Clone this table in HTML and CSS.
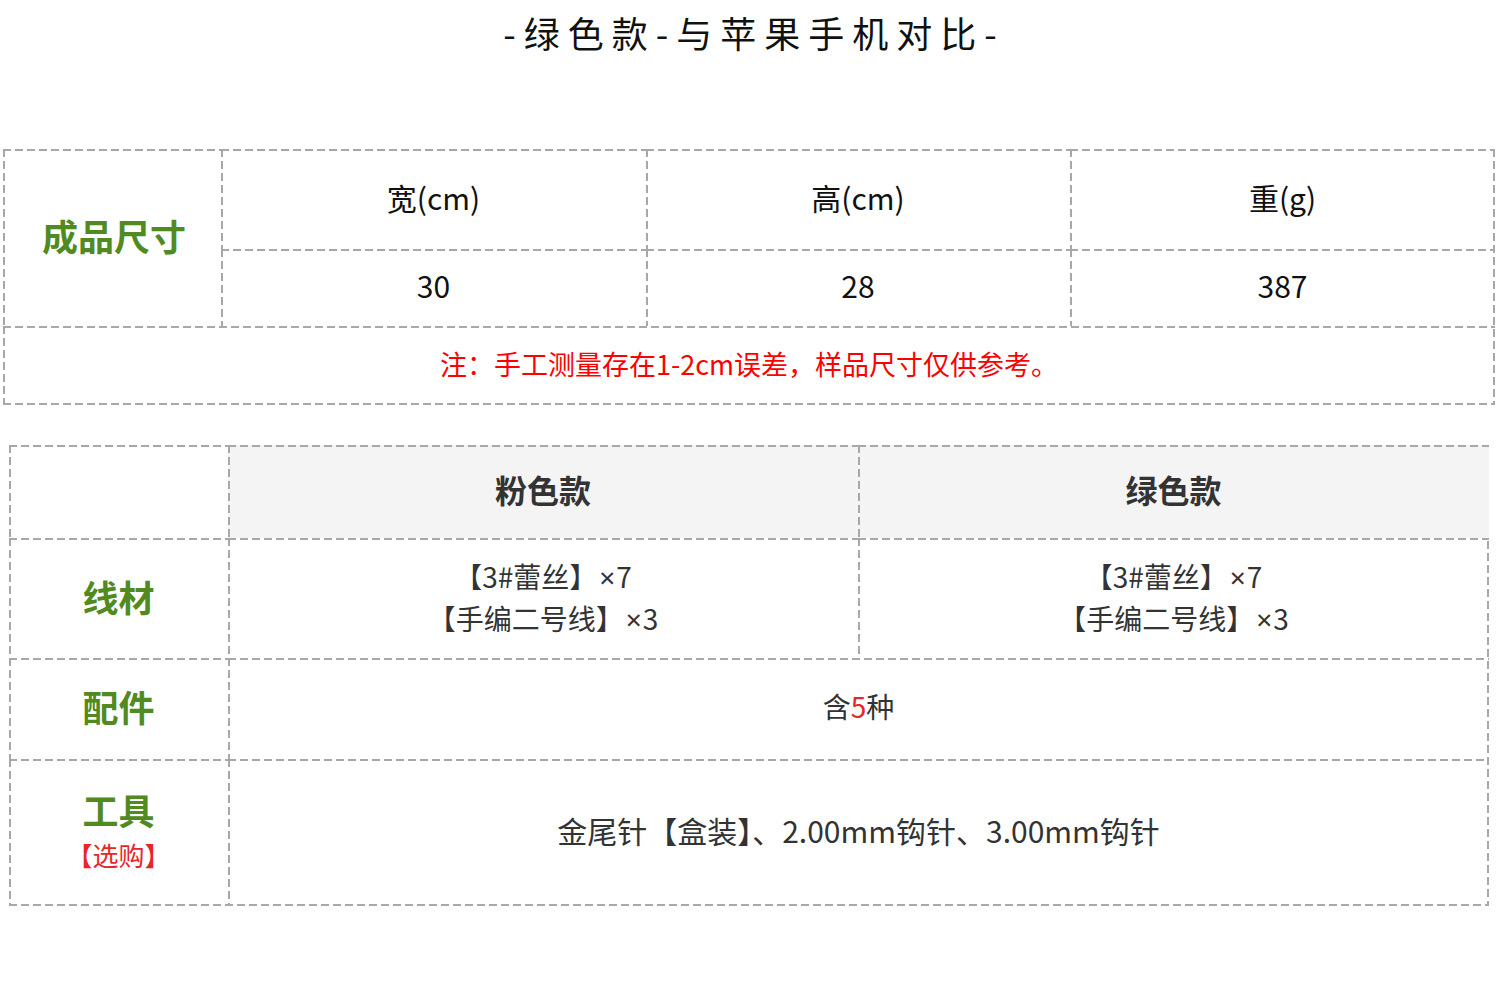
FILE: index.html
```html
<!DOCTYPE html>
<html lang="zh-CN">
<head>
<meta charset="utf-8">
<title>绿色款-与苹果手机对比</title>
<link rel="stylesheet" href="styles.css">
</head>
<body>
<div class="page">
  <h1 class="title">-绿色款-与苹果手机对比-</h1>

  <div class="grid size-table">
    <div class="cell label span-2r">成品尺寸</div>
    <div class="cell head">宽(cm)</div>
    <div class="cell head">高(cm)</div>
    <div class="cell head">重(g)</div>
    <div class="cell value">30</div>
    <div class="cell value">28</div>
    <div class="cell value">387</div>
    <div class="cell note span-all">注：手工测量存在1-2cm误差，样品尺寸仅供参考。</div>
  </div>

  <div class="grid spec-table">
    <div class="cell"></div>
    <div class="cell shaded colhead">粉色款</div>
    <div class="cell shaded colhead">绿色款</div>

    <div class="cell label">线材</div>
    <div class="cell body lines"><span>【3#蕾丝】<span class="times">×</span>7</span><span>【手编二号线】<span class="times">×</span>3</span></div>
    <div class="cell body lines"><span>【3#蕾丝】<span class="times">×</span>7</span><span>【手编二号线】<span class="times">×</span>3</span></div>

    <div class="cell label">配件</div>
    <div class="cell body span-2c">含<em class="red">5</em>种</div>

    <div class="cell label stack"><span>工具</span><span class="opt">【选购】</span></div>
    <div class="cell body tools span-2c">金尾针【盒装】、2.00mm钩针、3.00mm钩针</div>
  </div>
</div>
</body>
</html>
```

FILE: styles.css
```css
* { box-sizing: border-box; }

html, body {
  margin: 0;
  padding: 0;
  background: #ffffff;
}

body {
  font-family: "Noto Sans CJK SC", "Noto Sans", sans-serif;
  color: #111;
}

.page {
  width: 1500px;
  height: 988px;
  overflow: hidden;
}

.title {
  margin: 0;
  height: 72px;
  line-height: 64px;
  text-align: center;
  font-size: 36px;
  font-weight: 400;
  letter-spacing: 8px;
  padding-left: 8px;
  color: #111;
}

/* dashed grid: each cell draws its top + left dash, grid draws right + bottom */
.grid {
  display: grid;
  background:
    repeating-linear-gradient(90deg, #a8a8a8 0 8px, transparent 8px 12px) left bottom / 100% 2px no-repeat,
    repeating-linear-gradient(180deg, #a8a8a8 0 8px, transparent 8px 12px) right top / 2px 100% no-repeat;
}

.cell {
  display: flex;
  align-items: center;
  justify-content: center;
  text-align: center;
  padding-bottom: 5px;
  background:
    repeating-linear-gradient(90deg, #a8a8a8 0 8px, transparent 8px 12px) left top / 100% 2px no-repeat,
    repeating-linear-gradient(180deg, #a8a8a8 0 8px, transparent 8px 12px) left top / 2px 100% no-repeat;
}

.cell.shaded {
  background:
    repeating-linear-gradient(90deg, #a8a8a8 0 8px, transparent 8px 12px) left top / 100% 2px no-repeat,
    repeating-linear-gradient(180deg, #a8a8a8 0 8px, transparent 8px 12px) left top / 2px 100% no-repeat,
    #f4f4f4;
}

/* ---- size table ---- */
.size-table {
  margin: 77px 0 0 3px;
  width: 1492px;
  grid-template-columns: 218px 425px 424px 425px;
  grid-template-rows: 100px 77px 79px;
}

.span-2r { grid-row: span 2; }
.span-all { grid-column: 1 / -1; }
.span-2c { grid-column: span 2; }

.label {
  font-size: 36px;
  font-weight: 700;
  color: #528a22;
}

.size-table .label { padding-left: 4px; }

.head, .value {
  font-size: 30px;
  color: #111;
}

.note {
  font-size: 27px;
  color: #ff0000;
}

/* ---- spec table ---- */
.spec-table {
  margin: 40px 0 0 9px;
  width: 1480px;
  grid-template-columns: 219px 630px 631px;
  grid-template-rows: 93px 120px 101px 147px;
}

.colhead {
  font-size: 32px;
  font-weight: 700;
  color: #333;
}

.body {
  font-size: 28px;
  color: #333;
}

.times {
  font-family: "Noto Sans", "DejaVu Sans", sans-serif;
  margin: 0 1px 0 2px;
}

.lines {
  flex-direction: column;
  line-height: 41px;
  padding-bottom: 0;
}

.tools { font-size: 30px; }

.red {
  font-style: normal;
  color: #e8262a;
}

.stack {
  flex-direction: column;
  line-height: 46px;
  padding-bottom: 2px;
}

.opt {
  font-size: 26px;
  font-weight: 400;
  color: #e8262a;
  line-height: 46px;
}
```
